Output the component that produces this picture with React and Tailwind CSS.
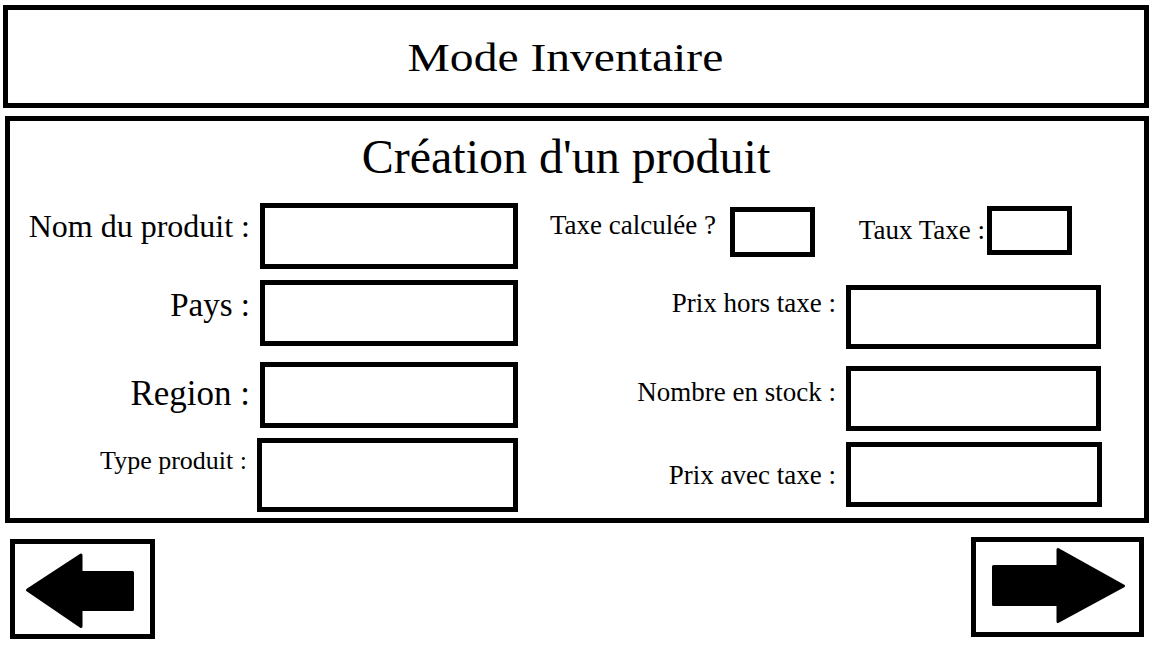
export default function App() {
  return (
    <div className="w-[1153px] h-[647px] bg-white text-black font-['Liberation_Serif',serif] overflow-hidden">
      <header className="ml-[3px] w-[1146px] mt-[5px] h-[103px] border-[5px] border-black flex justify-center pr-[21px] pt-[28px]">
        <h1 className="inline-block whitespace-nowrap text-[39px] leading-none font-normal scale-x-[1.22]">Mode Inventaire</h1>
      </header>

      <main className="ml-[5px] w-[1144px] mt-[8px] h-[407px] border-[5px] border-black flex flex-col">
        <h2 className="mt-[12px] pr-[22px] text-center text-[48px] leading-none font-normal whitespace-nowrap">Création d'un produit</h2>

        <div className="flex">
          {/* Left column */}
          <div className="flex flex-col w-[508px] shrink-0">
            <div className="flex items-start mt-[22px]">
              <div className="w-[240px] text-right text-[32px] leading-none whitespace-nowrap mt-[7px]">Nom du produit :</div>
              <div className="ml-[10px] w-[258px] h-[66px] border-[5px] border-black shrink-0" />
            </div>
            <div className="flex items-start mt-[11px]">
              <div className="w-[240px] text-right text-[33px] leading-none whitespace-nowrap mt-[9px]">Pays :</div>
              <div className="ml-[10px] w-[258px] h-[66px] border-[5px] border-black shrink-0" />
            </div>
            <div className="flex items-start mt-[16px]">
              <div className="w-[240px] text-right text-[35px] leading-none whitespace-nowrap mt-[14px]">Region :</div>
              <div className="ml-[10px] w-[258px] h-[66px] border-[5px] border-black shrink-0" />
            </div>
            <div className="flex items-start mt-[10px]">
              <div className="w-[240px] text-right text-[26px] leading-none whitespace-nowrap mt-[10px]">Type produit :</div>
              <div className="ml-[10px] w-[261px] h-[74px] border-[5px] border-black shrink-0" />
            </div>
          </div>

          {/* Right column */}
          <div className="flex flex-col">
            <div className="flex items-start mt-[25px]">
              <div className="w-[198px] text-right text-[27px] leading-none whitespace-nowrap mt-[6px]">Taxe calculée ?</div>
              <div className="ml-[14px] mt-[1px] w-[85px] h-[50px] border-[5px] border-black shrink-0" />
              <div className="w-[170px] text-right text-[27px] leading-none whitespace-nowrap mt-[11px]">Taux Taxe :</div>
              <div className="ml-[2px] w-[85px] h-[49px] border-[5px] border-black shrink-0" />
            </div>
            <div className="flex items-start mt-[28px]">
              <div className="w-[318px] text-right text-[27px] leading-none whitespace-nowrap mt-[5px]">Prix hors taxe :</div>
              <div className="ml-[10px] w-[255px] h-[64px] border-[5px] border-black shrink-0" />
            </div>
            <div className="flex items-start mt-[17px]">
              <div className="w-[318px] text-right text-[27px] leading-none whitespace-nowrap mt-[13px]">Nombre en stock :</div>
              <div className="ml-[10px] w-[255px] h-[65px] border-[5px] border-black shrink-0" />
            </div>
            <div className="flex items-start mt-[11px]">
              <div className="w-[318px] text-right text-[27px] leading-none whitespace-nowrap mt-[20px]">Prix avec taxe :</div>
              <div className="ml-[10px] w-[256px] h-[65px] border-[5px] border-black shrink-0" />
            </div>
          </div>
        </div>
      </main>

      <div className="flex justify-between items-start mt-[14px]">
        <button className="ml-[10px] mt-[2px] w-[145px] h-[100px] border-[5px] border-black bg-white p-0 block">
          <svg viewBox="0 0 135 90" className="w-full h-full block">
            <polygon
              points="12.5,46 66,11 66,28.5 117.5,28.5 117.5,65.5 66,65.5 66,82.5"
              fill="#000"
              stroke="#000"
              strokeWidth="3"
              strokeLinejoin="round"
            />
          </svg>
        </button>
        <button className="mr-[9px] w-[173px] h-[100px] border-[5px] border-black bg-white p-0 block">
          <svg viewBox="0 0 163 90" className="w-full h-full block">
            <polygon
              points="17.5,24.5 82,24.5 82,7.5 147.5,44 82,79.5 82,62.5 17.5,62.5"
              fill="#000"
              stroke="#000"
              strokeWidth="3"
              strokeLinejoin="round"
            />
          </svg>
        </button>
      </div>
    </div>
  );
}
